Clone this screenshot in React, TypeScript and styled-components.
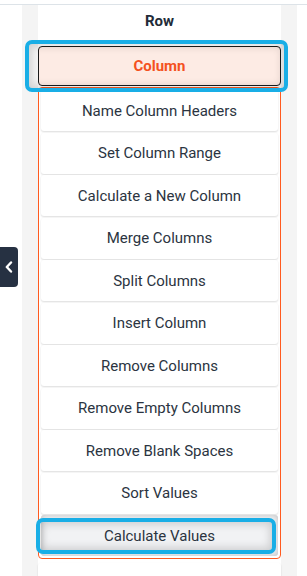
import styled, { createGlobalStyle } from "styled-components";

const GlobalStyle = createGlobalStyle`
  html, body {
    margin: 0;
    padding: 0;
    background: #ffffff;
  }
  body {
    font-family: Roboto, "Liberation Sans", Arial, sans-serif;
    -webkit-font-smoothing: antialiased;
  }
`;

const Page = styled.div`
  position: relative;
  width: 307px;
  height: 576px;
  overflow: hidden;
  padding-top: 4px;
  box-sizing: border-box;
`;

const Body = styled.div`
  display: flex;
  height: 100%;
  border-top: 1px solid #dde3e8;
`;

const Gutter = styled.div`
  width: 22px;
  flex-shrink: 0;
`;

const Panel = styled.div`
  width: 275px;
  flex-shrink: 0;
  background: #f4f4f4;
  padding: 0 16px;
  box-sizing: border-box;
`;

const List = styled.div`
  display: flex;
  flex-direction: column;
  width: 243px;
  min-height: 100%;
  background: #ffffff;
`;

const RowItem = styled.div`
  height: 31px;
  display: flex;
  align-items: center;
  justify-content: center;
  font-size: 15px;
  font-weight: 700;
  color: #222b38;
`;

const Selected = styled.div`
  margin-top: 10px;
  height: 40px;
  box-sizing: border-box;
  border: 1.5px solid #1b1b1b;
  border-radius: 4px;
  background: #fdebe4;
  display: flex;
  align-items: center;
  justify-content: center;
  font-size: 15px;
  font-weight: 700;
  color: #f4511e;
`;

const Group = styled.div`
  margin-top: 1px;
  border: 1px solid #ff5a1f;
  border-radius: 4px;
  padding: 2px 2px 2px;
  display: flex;
  flex-direction: column;
  gap: 1.5px;
`;

const Item = styled.div<{ $active?: boolean }>`
  height: 41px;
  flex-shrink: 0;
  display: flex;
  align-items: center;
  justify-content: center;
  font-size: 15px;
  color: #2b3441;
  border-radius: 3px;
  background: ${(p) => (p.$active ? "#f1f2f4" : "#ffffff")};
  box-shadow: ${(p) =>
    p.$active
      ? "inset 0 0 6px rgba(0, 0, 0, 0.22)"
      : "0 1px 2px rgba(0, 0, 0, 0.14)"};
`;

const After = styled(Item)`
  margin-top: 4px;
  align-items: flex-start;
  padding-top: 11px;
  box-sizing: border-box;
`;

const Ring = styled.div`
  position: absolute;
  box-sizing: border-box;
  border: 4px solid #19aee6;
  border-radius: 7px;
  box-shadow: inset 0 0 8px 2px rgba(0, 0, 0, 0.16);
  pointer-events: none;
`;

const Tab = styled.button`
  position: absolute;
  left: 0;
  top: 247px;
  width: 18px;
  height: 40px;
  padding: 0;
  border: none;
  border-radius: 0 4px 4px 0;
  background: #263142;
  display: flex;
  align-items: center;
  justify-content: center;
  cursor: pointer;
`;

const items = [
  "Name Column Headers",
  "Set Column Range",
  "Calculate a New Column",
  "Merge Columns",
  "Split Columns",
  "Insert Column",
  "Remove Columns",
  "Remove Empty Columns",
  "Remove Blank Spaces",
  "Sort Values",
  "Calculate Values",
];

export default function App() {
  return (
    <Page>
      <GlobalStyle />
      <Body>
        <Gutter />
        <Panel>
          <List>
            <RowItem>Row</RowItem>
            <Selected>Column</Selected>
            <Group>
              {items.map((label, i) => (
                <Item key={label} $active={i === items.length - 1}>
                  {label}
                </Item>
              ))}
            </Group>
            <After>Fill Values</After>
          </List>
        </Panel>
      </Body>
      <Ring style={{ left: 25, top: 40, width: 263, height: 52 }} />
      <Ring style={{ left: 36, top: 518, width: 240, height: 36 }} />
      <Tab aria-label="Collapse">
        <svg width="10" height="12" viewBox="0 0 10 12">
          <path
            d="M7 1.5 L2.8 6 L7 10.5"
            fill="none"
            stroke="#ffffff"
            strokeWidth="2.4"
            strokeLinecap="round"
            strokeLinejoin="round"
          />
        </svg>
      </Tab>
    </Page>
  );
}
